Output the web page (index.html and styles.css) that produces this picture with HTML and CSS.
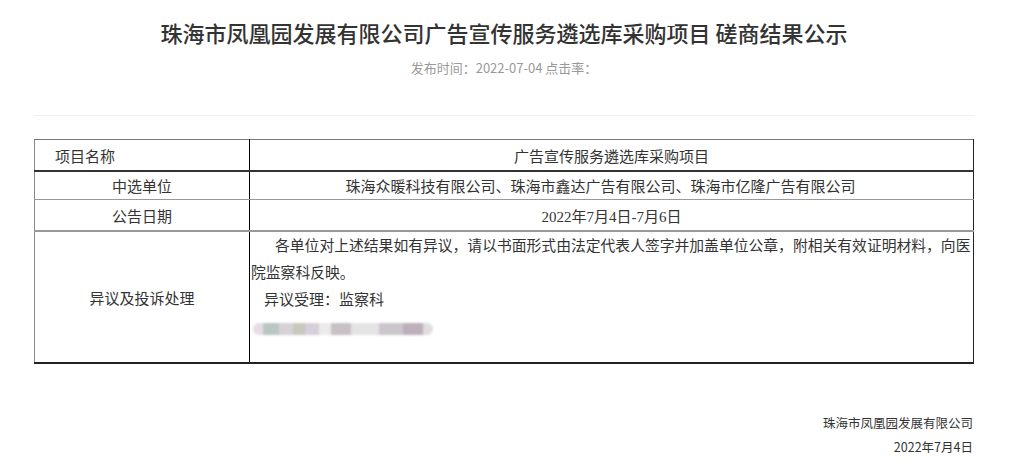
FILE: index.html
```html
<!DOCTYPE html>
<html lang="zh-CN">
<head>
<meta charset="utf-8">
<title>磋商结果公示</title>
<link rel="stylesheet" href="styles.css">
</head>
<body>
<div class="page">
  <h1 class="title">珠海市凤凰园发展有限公司广告宣传服务遴选库采购项目 磋商结果公示</h1>
  <div class="meta">发布时间：2022-07-04 点击率：</div>
  <hr class="rule">
  <table class="result">
    <colgroup><col class="c1"><col class="c2"></colgroup>
    <tr class="r1">
      <td class="label left">项目名称</td>
      <td class="value">广告宣传服务遴选库采购项目</td>
    </tr>
    <tr class="r2">
      <td class="label">中选单位</td>
      <td class="value shift">珠海众暖科技有限公司、珠海市鑫达广告有限公司、珠海市亿隆广告有限公司</td>
    </tr>
    <tr class="r3">
      <td class="label">公告日期</td>
      <td class="value">2022年7月4日-7月6日</td>
    </tr>
    <tr class="r4">
      <td class="label">异议及投诉处理</td>
      <td class="notes">
        <p class="para">各单位对上述结果如有异议，请以书面形式由法定代表人签字并加盖单位公章，附相关有效证明材料，向医院监察科反映。</p>
        <p class="contact">异议受理：监察科</p>
        <p class="phone"><span class="blur"></span></p>
      </td>
    </tr>
  </table>
  <div class="sign">
    <div>珠海市凤凰园发展有限公司</div>
    <div>2022年7月4日</div>
  </div>
</div>
</body>
</html>
```
FILE: styles.css
```css
html, body {
  margin: 0;
  padding: 0;
  background: #fff;
}
body {
  font-family: "Noto Sans CJK SC", "Noto Sans", sans-serif;
  color: #333;
}
.page {
  margin-left: 34px;
  width: 940px;
}
.title {
  margin: 0;
  padding-top: 17px;
  font-size: 22px;
  line-height: 30px;
  font-weight: 500;
  text-align: center;
  color: #333;
}
.meta {
  margin-top: 11px;
  font-size: 13px;
  line-height: 20px;
  color: #999;
  text-align: center;
}
.rule {
  margin: 37px 0 0;
  border: 0;
  border-top: 1px solid #eee;
  height: 0;
}
.result {
  margin-top: 23px;
  border-collapse: collapse;
  width: 940px;
  table-layout: fixed;
  font-family: "Liberation Serif", "Noto Sans CJK SC", serif;
  font-size: 15px;
  color: #333;
}
.c1 { width: 215px; }
.result td {
  padding: 0;
  border-left: 1px solid #888;
  border-right: 1px solid #000;
}
.result td.value, .result td.notes {
  border-left: 1px solid #000;
  border-right: 1px solid #222;
}
.r1 td { border-top: 1px solid #777; border-bottom: 2px solid #333; height: 30px; }
.r2 td { border-bottom: 1px solid #999; height: 27px; }
.r3 td { border-bottom: 2px solid #999; height: 30px; }
.r4 td { border-bottom: 2px solid #222; height: 129px; }
.label {
  text-align: center;
  vertical-align: middle;
}
.label.left {
  text-align: left;
  padding-left: 20px !important;
}
.value {
  text-align: center;
  vertical-align: middle;
}
.value.shift {
  padding-right: 22px !important;
}
.notes {
  vertical-align: top;
  padding: 1px 0 0 1px !important;
}
.notes p {
  margin: 0;
  line-height: 27px;
}
.para {
  font-size: 14.8px;
  text-indent: 24px;
}
.contact {
  padding-left: 13px;
  font-size: 15px;
}
.phone {
  height: 27px;
  display: flex;
  align-items: center;
}
.blur {
  display: inline-block;
  width: 180px;
  height: 12px;
  border-radius: 6px;
  background: linear-gradient(90deg,
    #e6dce4 0, #e6dce4 10px,
    #b9c6c2 10px, #b9c6c2 26px,
    #d6d2d6 26px, #d6d2d6 40px,
    #c8c8bf 40px, #c8c8bf 52px,
    #d4cfd9 52px, #d4cfd9 66px,
    #ebebeb 66px, #ebebeb 78px,
    #c7c0c5 78px, #c7c0c5 98px,
    #e4e4e4 98px, #e4e4e4 126px,
    #cbc6cb 126px, #cbc6cb 150px,
    #bcb0bb 150px, #bcb0bb 170px,
    #e0dde0 170px);
  filter: blur(1px);
  margin-left: 2px;
  margin-top: 2px;
}
.sign {
  margin-top: 47px;
  text-align: right;
  font-size: 12.5px;
  line-height: 24px;
  color: #333;
  padding-right: 1px;
}
```
